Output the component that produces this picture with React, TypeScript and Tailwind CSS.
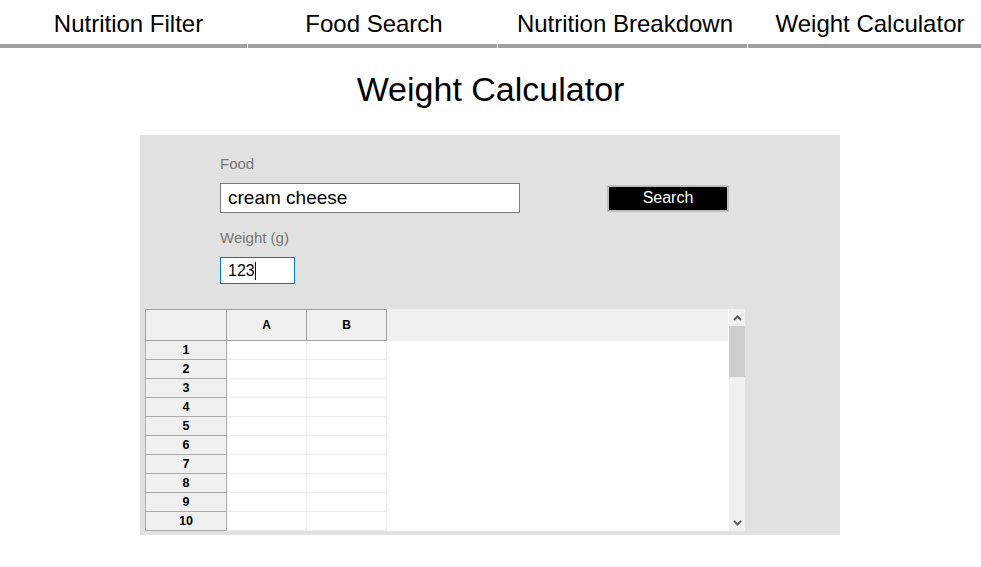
import React from 'react';

const TABS = [
  { label: 'Nutrition Filter', cls: 'w-[247px] pl-[10px]' },
  { label: 'Food Search', cls: 'w-[249px] pl-[3px]' },
  { label: 'Nutrition Breakdown', cls: 'w-[249px] pl-[5px]' },
  { label: 'Weight Calculator', cls: 'flex-1 pl-[11px]' },
];

const ROWS = [1, 2, 3, 4, 5, 6, 7, 8, 9, 10];

const NavBar: React.FC = () => (
  <nav className="flex gap-[1px] h-[48px]">
    {TABS.map((tab) => (
      <div
        key={tab.label}
        className={`${tab.cls} shrink-0 h-[48px] border-b-4 border-[#a0a0a0] text-center text-[24px] leading-[28px] pt-[10px] text-black whitespace-nowrap`}
      >
        {tab.label}
      </div>
    ))}
  </nav>
);

const Chevron: React.FC<{ down?: boolean }> = ({ down }) => (
  <svg width="9" height="6" viewBox="0 0 9 6" className="block">
    <polyline
      points={down ? '1,1 4.5,4.5 8,1' : '1,5 4.5,1.5 8,5'}
      fill="none"
      stroke="#606060"
      strokeWidth="2"
    />
  </svg>
);

const Spreadsheet: React.FC = () => (
  <div className="ml-[5px] w-[600px] h-[222px] flex bg-white overflow-hidden">
    <div className="w-[583px] flex flex-col">
      {/* column headers */}
      <div className="flex h-[32px] shrink-0 bg-[#f0f0f0]">
        <div className="w-[82px] h-[32px] border border-[#a0a0a0]" />
        {['A', 'B'].map((c) => (
          <div
            key={c}
            className="w-[80px] h-[32px] border-y border-r border-[#a0a0a0] flex items-center justify-center text-[12px] font-bold text-black"
          >
            {c}
          </div>
        ))}
        <div className="flex-1" />
      </div>
      {ROWS.map((r) => (
        <div key={r} className="flex h-[19px] shrink-0">
          <div className="w-[82px] h-[19px] border-x border-b border-[#ababab] bg-[#f0f0f0] flex items-center justify-center text-[12.5px] font-bold text-black leading-none">
            {r}
          </div>
          <div className="w-[80px] h-[19px] border-r border-b border-[#ececec]" />
          <div className="w-[80px] h-[19px] border-r border-b border-[#ececec]" />
          <div className="flex-1" />
        </div>
      ))}
    </div>
    <div className="ml-[1px] w-[16px] bg-[#f0f0f0] flex flex-col">
      <div className="h-[17px] flex items-center justify-center">
        <Chevron />
      </div>
      <div className="h-[51px] bg-[#cdcdcd]" />
      <div className="flex-1" />
      <div className="h-[17px] flex items-center justify-center">
        <Chevron down />
      </div>
    </div>
  </div>
);

const App: React.FC = () => {
  return (
    <div className="min-h-screen bg-white font-['Liberation_Sans',Arial,sans-serif] text-black">
      <NavBar />
      <h1 className="text-center text-[34px] leading-[40px] mt-[21px] mb-[26px] font-normal">
        Weight Calculator
      </h1>
      <section className="ml-[140px] w-[700px] bg-[#e1e1e1] pt-[20px] pb-[4px]">
        <div className="pl-[80px]">
          <label className="block text-[15px] leading-[18px] text-[#777777]">Food</label>
          <div className="mt-[10px] flex items-center">
            <input
              type="text"
              defaultValue="cream cheese"
              className="w-[300px] h-[30px] bg-white border border-[#7a7a7a] px-[7px] text-[19px] text-black outline-none"
            />
            <button
              type="button"
              className="ml-[87px] w-[122px] h-[27px] bg-black border-2 border-[#bdbdbd] text-white text-[16px] leading-none"
            >
              Search
            </button>
          </div>
          <label className="block mt-[16px] text-[15px] leading-[18px] text-[#777777]">Weight (g)</label>
          <div className="mt-[10px] w-[75px] h-[27px] bg-white border border-[#0078d7] px-[7px] flex items-center text-[16px] text-black">
            <span>123</span>
            <span className="w-[1px] h-[18px] bg-black" />
          </div>
        </div>
        <div className="mt-[25px]">
          <Spreadsheet />
        </div>
      </section>
    </div>
  );
};

export default App;
